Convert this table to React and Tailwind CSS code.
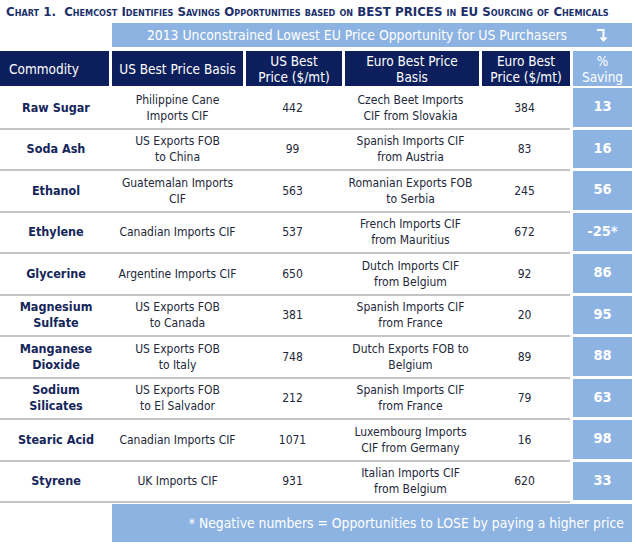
import React from "react";

const rows = [
  ["Raw Sugar", "Philippine Cane\nImports CIF", "442", "Czech Beet Imports\nCIF from Slovakia", "384", "13"],
  ["Soda Ash", "US Exports FOB\nto China", "99", "Spanish Imports CIF\nfrom Austria", "83", "16"],
  ["Ethanol", "Guatemalan Imports\nCIF", "563", "Romanian Exports FOB\nto Serbia", "245", "56"],
  ["Ethylene", "Canadian Imports CIF", "537", "French Imports CIF\nfrom Mauritius", "672", "-25*"],
  ["Glycerine", "Argentine Imports CIF", "650", "Dutch Imports CIF\nfrom Belgium", "92", "86"],
  ["Magnesium\nSulfate", "US Exports FOB\nto Canada", "381", "Spanish Imports CIF\nfrom France", "20", "95"],
  ["Manganese\nDioxide", "US Exports FOB\nto Italy", "748", "Dutch Exports FOB to\nBelgium", "89", "88"],
  ["Sodium\nSilicates", "US Exports FOB\nto El Salvador", "212", "Spanish Imports CIF\nfrom France", "79", "63"],
  ["Stearic Acid", "Canadian Imports CIF", "1071", "Luxembourg Imports\nCIF from Germany", "16", "98"],
  ["Styrene", "UK Imports CIF", "931", "Italian Imports CIF\nfrom Belgium", "620", "33"],
];

const font = { fontFamily: '"DejaVu Sans Condensed", "Liberation Sans", sans-serif' };

function Lines({ text }) {
  return text.split("\n").map((t, i) => <div key={i}>{t}</div>);
}

export default function App() {
  return (
    <div className="w-[635px] h-[544px] bg-white relative overflow-hidden" style={font}>
      <div className="h-[23px] pl-[6px] pt-[4px] text-[13.15px] font-bold text-[#1a2f6b] whitespace-nowrap leading-[15px]" style={{ fontVariant: "small-caps" }}>
        Chart 1.&nbsp; Chemcost Identifies Savings Opportunities based on BEST PRICES in EU Sourcing of Chemicals
      </div>

      <div className="ml-[112px] w-[520px] h-[24px] bg-[#8db3e2] flex items-center text-white text-[13.8px] relative">
        <div className="w-[490px] text-center whitespace-nowrap">2013 Unconstrained Lowest EU Price Opportunity for US Purchasers</div>
        <svg className="absolute left-[484px] top-[5px]" width="12" height="15" viewBox="0 0 12 15">
          <path d="M1 2 H7.5 V11" stroke="white" strokeWidth="2" fill="none" />
          <path d="M3.5 9.5 L7.5 14 L11.5 9.5 Z" fill="white" />
        </svg>
      </div>

      <div className="mt-[4px] grid grid-cols-[109px_131px_96px_134px_88px_59px] gap-x-[3px] h-[35px] text-white text-[13.5px] leading-[16px] text-center">
        <div className="bg-[#0c1f5c] flex items-center pl-[9px]">Commodity</div>
        <div className="bg-[#0c1f5c] flex items-center justify-center">US Best Price Basis</div>
        <div className="bg-[#0c1f5c] flex flex-col items-center justify-center"><div>US Best</div><div>Price ($/mt)</div></div>
        <div className="bg-[#0c1f5c] flex flex-col items-center justify-center"><div>Euro Best Price</div><div>Basis</div></div>
        <div className="bg-[#0c1f5c] flex flex-col items-center justify-center"><div>Euro Best</div><div>Price ($/mt)</div></div>
        <div className="bg-[#8db3e2] flex flex-col items-center justify-center"><div>%</div><div>Saving</div></div>
      </div>

      <div className="mt-[2px]">
        {rows.map((r, i) => (
          <div key={i} className="grid grid-cols-[570px_3px_59px] h-[41.5px]">
            <div className="grid grid-cols-[112px_131px_99px_137px_91px] border-b-2 border-[#c4c4c4] text-[12px] leading-[16px] text-[#23283a] text-center">
              <div className="flex flex-col items-center justify-center font-bold text-[12.5px] text-[#14255a]"><Lines text={r[0]} /></div>
              <div className="flex flex-col items-center justify-center"><Lines text={r[1]} /></div>
              <div className="flex flex-col items-center justify-center"><Lines text={r[2]} /></div>
              <div className="flex flex-col items-center justify-center"><Lines text={r[3]} /></div>
              <div className="flex flex-col items-center justify-center"><Lines text={r[4]} /></div>
            </div>
            <div />
            <div className="h-[38.5px] bg-[#8db3e2] flex items-center justify-center text-white font-bold text-[14.5px]">{r[5]}</div>
          </div>
        ))}
      </div>

      <div className="mt-[1px] ml-[112px] w-[520px] h-[38px] bg-[#8db3e2] flex items-center justify-end pr-[8px] text-white text-[13.8px] whitespace-nowrap">
        * Negative numbers = Opportunities to LOSE by paying a higher price
      </div>
    </div>
  );
}
